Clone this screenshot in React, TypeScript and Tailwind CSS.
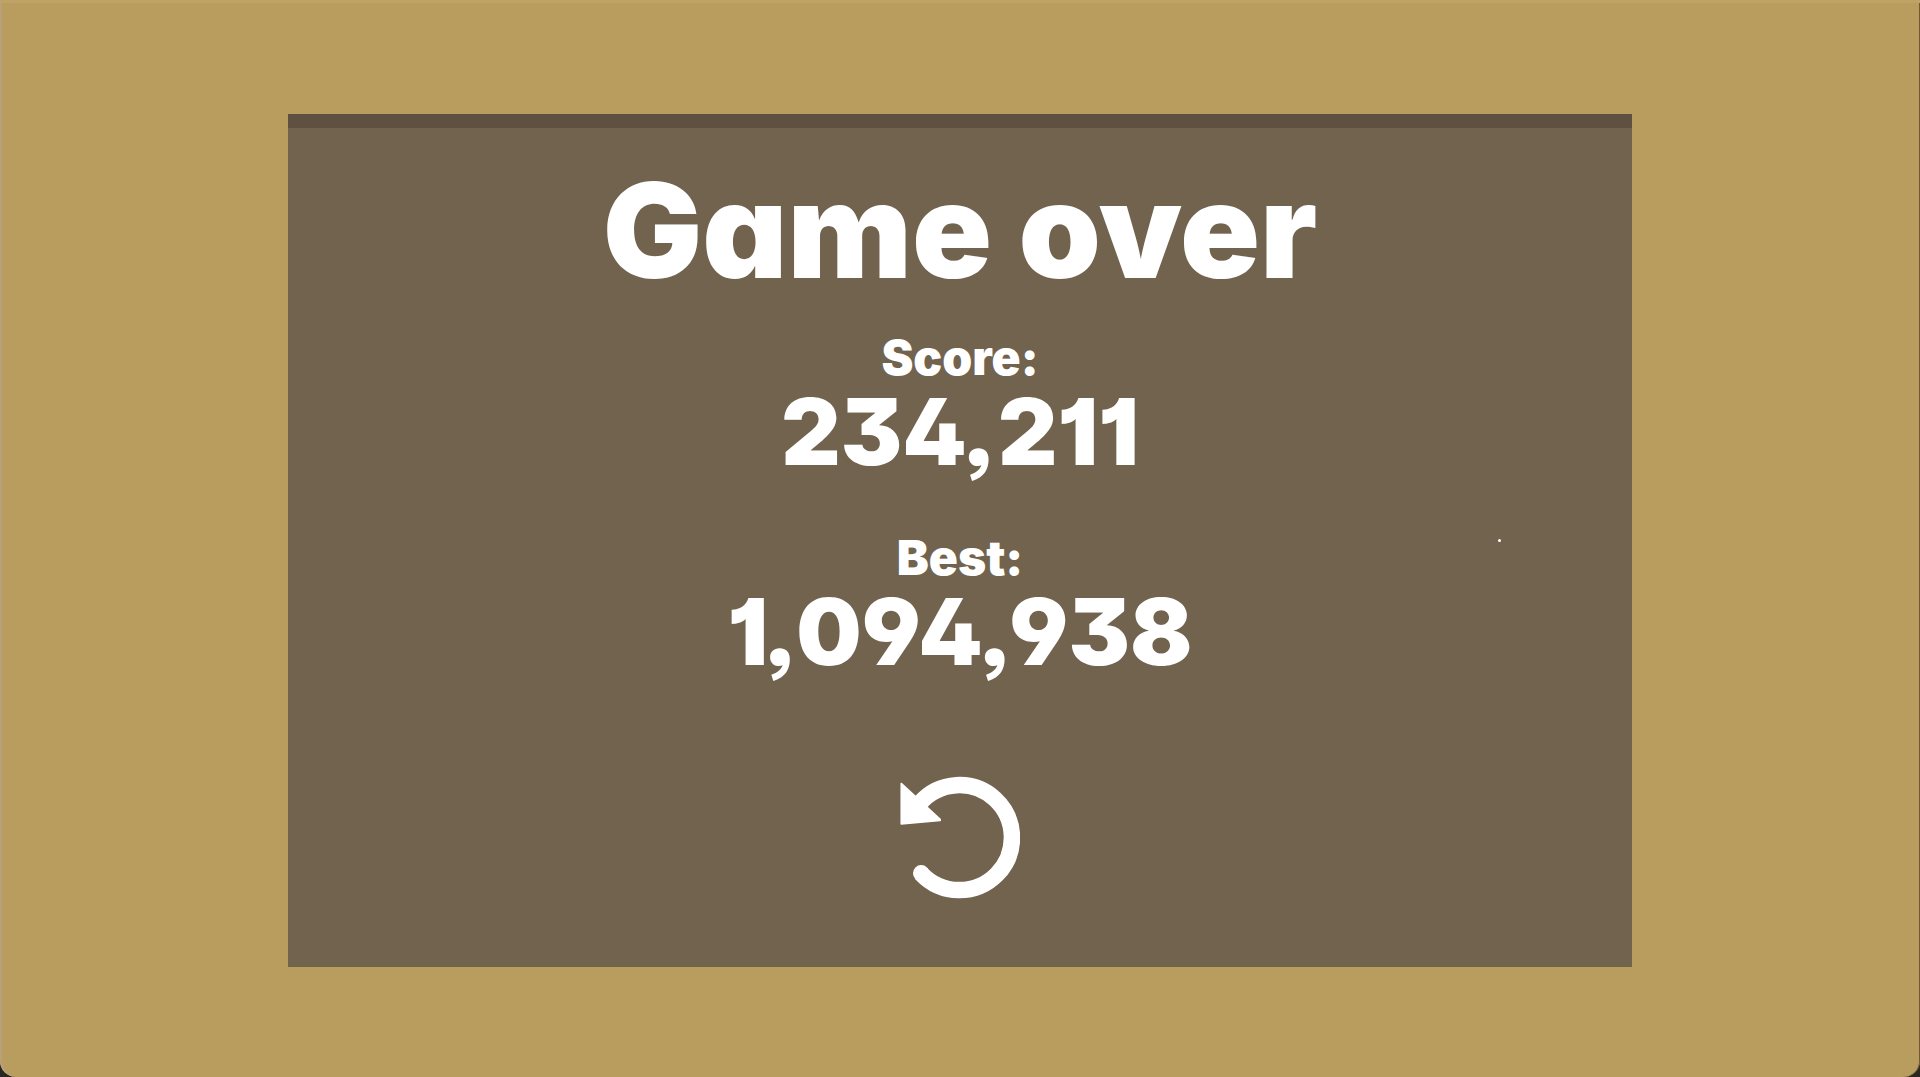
const results = [
  { label: "Score:", value: 234211 },
  { label: "Best:", value: 1094938 },
];

function RestartIcon() {
  return (
    <svg className="h-[123px] w-[120px]" viewBox="20 15 120 123" fill="none" aria-hidden="true">
      <path
        d="M39.6 42.4A52.5 52.5 0 1 1 41.2 112.6"
        stroke="currentColor"
        strokeWidth={16.5}
      />
      <circle cx={41.2} cy={112.3} r={8.2} fill="currentColor" />
      <path
        d="M21.2 22.4L60.2 58.4V59.6L21.2 63Z"
        fill="currentColor"
        stroke="currentColor"
        strokeWidth={1.5}
        strokeLinejoin="round"
      />
    </svg>
  );
}

export default function App() {
  return (
    <div className="bg-[#2a2622]">
      <main className="flex min-h-screen items-center justify-center rounded-b-2xl border-t-3 border-[#bfa266] bg-[#b99d5f] py-24 font-['Inter',sans-serif] font-black text-white shadow-[inset_-1px_0_0_#6f5a35,inset_2px_0_0_#b9a078]">
        <section className="relative flex w-[70%] flex-col items-center border-t-14 border-[#5f5041] bg-[#72634e] pt-[38px] pb-[68px]">
          <h1 className="text-[132px] leading-[128px] [font-feature-settings:'cv11']">
            Game over
          </h1>

          <dl className="mt-10 flex flex-col gap-[54px] text-center">
            {results.map((result) => (
              <div key={result.label} className="flex flex-col gap-0.5">
                <dt className="text-5xl leading-[48px]">{result.label}</dt>
                <dd className="text-[92px] leading-[96px] [font-feature-settings:'cv01','cv02','cv04','cv09','ss03']">
                  {result.value.toLocaleString("en-US")}
                </dd>
              </div>
            ))}
          </dl>

          <button type="button" aria-label="Play again" className="mt-24">
            <RestartIcon />
          </button>

          {/* Stray particle left on the board */}
          <span className="absolute top-[49%] left-[90%] size-[3px] rounded-full bg-white" />
        </section>
      </main>
    </div>
  );
}
